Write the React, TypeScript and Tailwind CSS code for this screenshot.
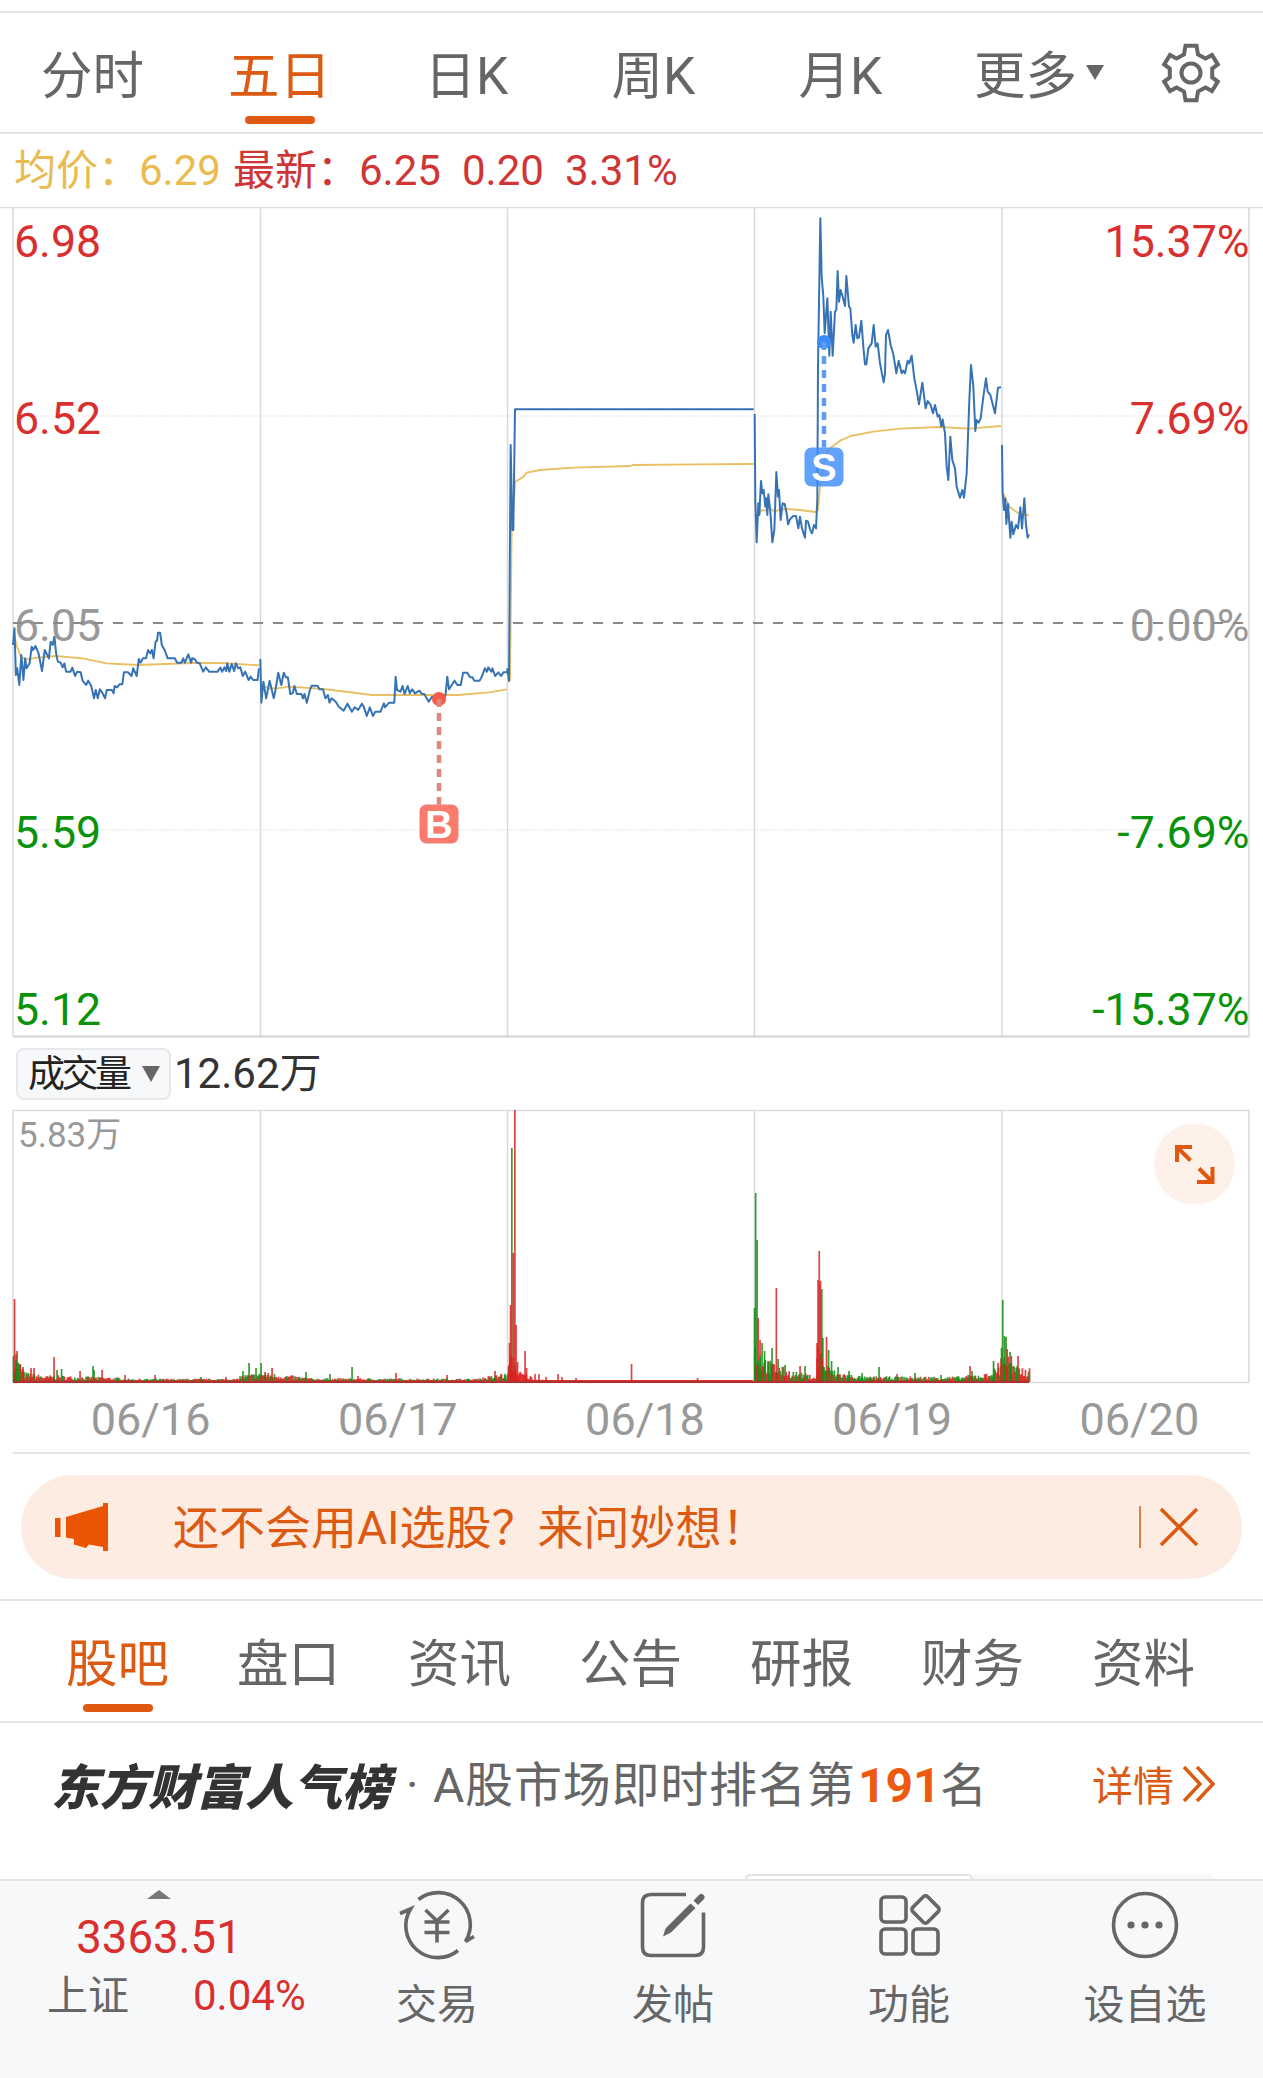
import type { ReactNode } from 'react'

const periods = ['分时', '五日', '日K', '周K', '月K']
const sections = ['股吧', '盘口', '资讯', '公告', '研报', '财务', '资料']
const dates = ['06/16', '06/17', '06/18', '06/19', '06/20']

const RED = '#d92f2f'
const GREEN = '#0a930a'
const BLUE = '#3673b5'
const YELLOW = '#eabf62'

const dayLines = [13, 260.5, 507.5, 754.5, 1002, 1249]

// every segment carries its own local coordinate space
const priceSegments = [
  {
    transform: 'translate(0 590) scale(.34435 .33333)',
    price: [
      '38,165 42,115 46,255 50,235 56,285 62,195 68,270 73,205 77,235 86,220 92,170 96,180 103,168 112,190 122,243 130,180 142,205 147,155 153,165 158,140 163,190 168,215 176,218 182,232 187,220 192,245 205,245 210,233 218,258 224,245 234,247 240,272 250,285 256,272 265,288 273,325 278,300 284,325 290,298 298,310 305,325 310,300 325,300 330,310 333,288 340,292 347,283 355,283 360,247 372,247 382,258 387,235 397,258 403,207 408,218 415,205 424,205 430,180 436,190 441,180 446,205 452,155 456,152 459,128 465,128 470,165 478,180 487,205 508,205 514,218 527,218 532,205 537,218 547,193 555,218 558,205 565,207 572,218 580,220 590,245 598,232 607,245 632,245 640,233 645,245 652,232 657,243 660,220 666,245 673,222 680,243 685,220 692,235 698,232 705,258 712,245 722,270 728,260 735,270 748,270 752,235',
      '756,207 759,338 765,275 773,325 783,272 795,325 800,300 808,248 817,285 824,248 830,262 836,262 843,312 850,310 855,288 862,312 875,312 880,325 884,312 891,338 900,300 905,287 922,287 928,298 938,298 945,325 952,315 957,338 963,325 975,335 984,350 998,362 1009,341 1022,365 1030,352 1040,360 1051,341 1057,352 1065,378 1074,352 1083,378 1090,365 1105,365 1115,340 1118,352 1130,338 1145,338 1149,260 1153,300 1163,305 1169,288 1175,312 1184,288 1190,310 1197,298 1205,310 1218,302 1225,312 1232,312 1245,335 1255,320 1275,328 1287,338 1294,312 1299,260 1304,298 1320,272 1328,285 1338,285 1345,248 1357,248 1365,262 1372,262 1377,272 1393,272 1400,258 1408,235 1414,245 1418,232 1427,245 1430,235 1438,258 1447,247 1455,258 1462,247 1472,247 1476,235',
    ],
    average: [
      '40,130 48,165 60,200 75,208 110,203 160,198 240,205 310,220 400,225 560,219 640,219 755,226',
      '762,285 780,295 805,295 840,290 940,297 1080,315 1200,315 1330,315 1420,307 1472,298',
    ],
  },
  {
    transform: 'translate(490 380) scale(.33333)',
    price: ['52,865 57,903 62,195 67,450 70,450 75,88 791,88'],
    average: ['60,903 65,460 70,380 76,305 85,300 100,290 110,278 150,270 250,263 420,258 430,255 620,253 791,252'],
  },
  {
    transform: 'translate(740 200) scale(.33333)',
    price: [
      '44,642 46,900 50,1027 55,910 58,945 63,843 67,880 71,870 76,920 79,895 82,945 85,883 91,935 97,1027 103,990 109,816 114,890 117,870 122,960 128,910 134,912 140,940 144,973 150,958 160,948 168,948 175,985 180,950 186,985 195,1013 198,962 204,965 210,988 216,1000 222,975 228,985 232,900 234,500 241,55 245,230 250,290 254,400 262,295 268,467 272,335 278,467 285,335 289,330 293,213 297,305 302,270 308,290 315,318 319,228 327,320 331,325 337,405 341,428 347,375 352,415 357,412 364,362 370,440 375,493 379,493 385,445 395,430 401,375 407,440 413,430 420,490 431,547 435,520 438,405 444,390 452,435 460,463 469,520 476,482 485,520 490,512 495,520 503,482 508,490 515,467 523,535 530,572 537,613 547,548 557,625 563,603 572,615 579,640 585,615 593,650 598,645 604,680 608,658 615,700 620,800 625,840 631,710 637,780 645,805 650,860 660,893 667,870 672,893 680,820 688,600 693,495 700,560 706,693 710,660 716,668 722,655 730,590 738,535 743,575 751,585 765,640 774,563 783,562',
      '786,735 788,880 792,930 796,895 799,972 804,912 811,1013 815,965 820,1003 828,975 834,985 841,922 846,985 853,895 858,975 863,1013 867,1003',
    ],
    average: [
      '58,940 65,930 75,932 85,922 105,935 115,930 140,927 180,930 225,936 234,930 240,860 255,770 270,745 300,722 332,708 400,695 480,686 600,681 685,686 725,683 783,678',
      '790,880 796,895 810,922 835,940 867,946',
    ],
  },
]

const priceLabels = [
  { y: 257, left: '6.98', right: '15.37%', color: RED },
  { y: 434, left: '6.52', right: '7.69%', color: RED },
  { y: 641, left: '6.05', right: '0.00%', color: '#999' },
  { y: 848, left: '5.59', right: '-7.69%', color: GREEN },
  { y: 1025, left: '5.12', right: '-15.37%', color: GREEN },
]

// x, height, up
const spikes: [number, number, number][] = [
  [13.5, 26, 0], [14.5, 83, 1], [16, 28, 0], [17, 31, 1], [20, 18, 1], [23, 15, 0], [31, 14, 1], [34, 14, 1],
  [54, 25, 1], [57, 12, 0], [61.5, 13, 0], [80, 11, 1], [93, 16, 0], [94, 12, 0], [102, 12, 1], [125, 7, 1],
  [155, 7, 1], [201, 5, 0], [226, 5, 1], [243, 11, 0], [249, 19, 0], [256, 14, 0],
  [261, 19, 0], [265, 10, 1], [272, 14, 1], [306, 10, 0], [330, 8, 0], [352, 15, 0], [358, 6, 1], [396, 9, 1],
  [447, 7, 1], [495, 11, 1], [501, 8, 1], [508.5, 15, 0],
  [509.5, 39, 1], [510.5, 77, 1], [511.8, 234, 0], [513.2, 129, 1], [514.8, 272, 1], [516, 57, 1], [517.5, 20, 1],
  [525, 31, 1], [526.5, 14, 1], [535, 8, 1], [539, 8, 1], [546, 5, 1], [558, 8, 1], [562, 5, 1], [576, 4, 1],
  [631.5, 18, 1], [697.5, 4, 1],
  [754.5, 74, 0], [755.6, 189, 0], [757, 142, 0], [758.2, 64, 1], [760, 42, 1], [762, 39, 0], [764.5, 31, 0],
  [768, 21, 1], [772, 34, 0], [776.3, 94, 1], [778, 23, 0], [785, 17, 0], [800, 16, 1], [805, 16, 0],
  [817, 39, 1], [818, 102, 1], [819.2, 131, 1], [820.4, 101, 1], [821.7, 93, 0], [822.8, 44, 0], [826.5, 45, 1],
  [828.5, 32, 0], [831.5, 21, 0], [838, 15, 0], [849, 11, 0], [862, 9, 0], [879, 15, 0], [897, 8, 1],
  [915, 9, 0], [941, 7, 0], [970, 16, 1], [972, 11, 0], [993.5, 21, 0], [998, 19, 1],
  [1001.5, 34, 0], [1002.7, 82, 0], [1004.5, 46, 0], [1006, 45, 0], [1007.2, 33, 1], [1010, 30, 0],
  [1011.3, 26, 1], [1018, 26, 1],
]

// from, to, height at start, height at end, share of rising minutes
const noise: [number, number, number, number, number][] = [
  [14, 24, 26, 12, 0.5], [24, 50, 9, 5, 0.6], [50, 120, 6, 4, 0.6], [120, 240, 3, 3, 0.6],
  [240, 260, 6, 8, 0.5], [260, 310, 9, 4, 0.6], [310, 480, 3.5, 3, 0.6], [480, 508, 4, 8, 0.5],
  [509, 516, 24, 24, 1], [516, 532, 11, 5, 1], [532, 546, 3, 2, 1], [546, 753, 1.6, 1.6, 1],
  [755, 770, 36, 16, 0.4], [770, 784, 19, 13, 0.5], [784, 817, 12, 5, 0.6], [817, 824, 36, 26, 0.5],
  [824, 838, 18, 8, 0.4], [838, 870, 9, 4, 0.5], [870, 965, 5, 5, 0.5], [965, 990, 6, 8, 0.6],
  [990, 1001, 10, 16, 0.5], [1001, 1012, 32, 20, 0.5], [1012, 1030, 15, 12, 0.5],
]

function volumeBars() {
  let seed = 7
  const rand = () => {
    seed = (seed * 16807) % 2147483647
    return seed / 2147483647
  }
  const bars: [number, number, number][] = []
  for (const [from, to, start, end, up] of noise) {
    for (let x = from; x < to; x += 1.03) {
      const peak = start + ((end - start) * (x - from)) / (to - from)
      bars.push([x, Math.max(2, peak * (0.35 + rand() * 0.8)), rand() < up ? 1 : 0])
    }
  }
  return [...spikes, ...bars]
}

function Marker({ x, y, top, label, color, dash }: { x: number; y: number; top: number; label: string; color: string; dash: string }) {
  return (
    <g>
      <circle cx={x} cy={y} r="7" fill={color} />
      <line x1={x} y1={y} x2={x} y2={top} stroke={dash} strokeWidth="4.5" strokeDasharray="8 6" />
      <rect x={x - 19.5} y={top} width="39" height="39" rx="7" fill={color} fillOpacity=".8" />
      <text x={x} y={top + 33} textAnchor="middle" fontSize="38" fontWeight="700" fill="#fff" fontFamily="Liberation Sans">
        {label}
      </text>
    </g>
  )
}

function PriceChart() {
  return (
    <svg className="block" width="1263" height="831" viewBox="0 207 1263 831">
      <path d="M0 207.5H1263" stroke="#dcdfe0" strokeWidth="1.5" />
      {dayLines.map(x => (
        <line key={x} x1={x} x2={x} y1="208" y2="1036" stroke="#d9d9d9" strokeWidth="1.5" />
      ))}
      <path d="M13 416H1249M13 830H1249" stroke="#dedede" strokeDasharray="1.5 1.5" />
      <path d="M13 1036.5H1249" stroke="#d3d3d3" strokeWidth="2" />
      <g fontFamily="Roboto" fontSize="44.7">
        {priceLabels.map(l => (
          <g key={l.left} fill={l.color}>
            <text x="14" y={l.y}>{l.left}</text>
            <text x="1249.500" y={l.y} textAnchor="end">{l.right}</text>
          </g>
        ))}
      </g>
      <path d="M13 623H1249" stroke="#8a8a8a" strokeWidth="1.8" strokeDasharray="10 10" />
      {priceSegments.map(s => (
        <g key={s.transform} transform={s.transform} fill="none" strokeLinejoin="round">
          {s.average.map(p => (
            <polyline key={p} points={p} stroke={YELLOW} strokeWidth="1.8" vectorEffect="non-scaling-stroke" />
          ))}
          {s.price.map(p => (
            <polyline key={p} points={p} stroke={BLUE} strokeWidth="2" vectorEffect="non-scaling-stroke" />
          ))}
        </g>
      ))}
      <Marker x={439} y={699} top={804.5} label="B" color="#f85a48" dash="#e0877c" />
      <Marker x={824} y={342} top={447.5} label="S" color="#3b8bfa" dash="#5f9cec" />
    </svg>
  )
}

function VolumeChart() {
  return (
    <svg className="block" width="1263" height="276" viewBox="0 1109 1263 276">
      <path d="M13 1110.5H1249M13 1382.5H1249" stroke="#dedede" strokeWidth="1.5" fill="none" />
      {dayLines.map(x => (
        <line key={x} x1={x} x2={x} y1="1110" y2="1382" stroke="#d9d9d9" strokeWidth="1.5" />
      ))}
      <text x="18" y="1147" fontSize="35" fill="#999" fontFamily="Roboto, Noto Sans CJK SC">5.83万</text>
      {volumeBars().map(([x, h, up], i) => (
        <rect key={i} x={x - 0.8} y={1382 - h} width="1.7" height={h} fill={up ? '#dc2222' : '#128c12'} fillOpacity=".85" />
      ))}
      <path d="M13 1382H1029" stroke="#b03030" strokeWidth="2" />
      <circle cx="1194.5" cy="1164" r="40.5" fill="#fef1ea" />
      <path
        d="M1177 1162V1147H1192M1177 1147L1190.500 1160.500M1212.500 1167V1182H1197M1212.500 1182L1199 1168.500"
        fill="none"
        stroke="#e0580f"
        strokeWidth="4"
      />
    </svg>
  )
}

function GearIcon() {
  return (
    <svg width="62" height="62" viewBox="-31 -31 62 62" fill="none" stroke="#666" strokeWidth="4">
      <path d="M-5.500-27.300H5.500L7-18.500L14.500-14.500L21-18L26.800-8.500L21.200-4.500V4.500L26.800 8.500L21 18L14.500 14.500L7 18.500L5.500 27.300H-5.500L-7 18.500L-14.500 14.500L-21 18L-26.800 8.500L-21.200 4.500V-4.500L-26.800-8.500L-21-18L-14.500-14.500L-7-18.500Z" />
      <circle r="9.500" />
    </svg>
  )
}

function Action({ label, children }: { label: string; children: ReactNode }) {
  return (
    <div className="flex w-[236px] flex-col items-center">
      <svg width="80" height="72" viewBox="-40 -36 80 72" fill="none" stroke="#666" strokeWidth="3.6">
        {children}
      </svg>
      <span className="mt-[18px] text-[41px] leading-[52px] text-[#666]">{label}</span>
    </div>
  )
}

export default function App() {
  return (
    <div className="h-[2078px] w-[1263px] overflow-hidden whitespace-nowrap bg-white font-['Roboto','Noto_Sans_CJK_SC',sans-serif]">
      <div className="h-[13px] border-b-2 border-[#e4e4e4]" />
      <nav className="flex h-[121px] items-stretch border-b-2 border-[#e4e4e4] text-[51.5px] text-[#666]">
        <div className="-ml-[1px] flex">
          {periods.map(p => (
            <div key={p} className="flex w-[187px] flex-col items-center pt-[26px]">
              <span className={p === '五日' ? 'leading-[76px] text-[#dd5a12]' : 'leading-[76px]'}>{p}</span>
              {p === '五日' && <span className="mt-[1px] h-[8px] w-[70px] rounded-full bg-[#e0580f]" />}
            </div>
          ))}
        </div>
        <div className="ml-[40px] flex items-start">
          <span className="mt-[26px] leading-[76px]">更多</span>
          <svg className="ml-[9px] mt-[52px]" width="18" height="15" viewBox="0 0 18 15">
            <path d="M0 0H18L9 15Z" fill="#666" />
          </svg>
        </div>
        <div className="ml-[56px] flex items-center">
          <GearIcon />
        </div>
      </nav>

      <div className="flex h-[73px] items-center pl-[14px] text-[42px] text-[#d03535]">
        <span className="w-[125px] text-[#eabb50]">均价：</span>
        <span className="w-[94px] text-[#eabb50]">6.29</span>
        <span className="w-[126px]">最新：</span>
        <span className="w-[103px]">6.25</span>
        <span className="w-[103px]">0.20</span>
        <span>3.31%</span>
      </div>
      <PriceChart />

      <div className="flex h-[71px] items-center pl-[16px]">
        <div className="flex h-[52px] w-[155px] items-center rounded-lg border-2 border-[#e6e8ec] bg-[#f7f8fa] pl-[10px]">
          <span className="mt-[2px] text-[37px] leading-[48px] tracking-[-3.5px] text-[#222]">成交量</span>
          <svg className="ml-[13px]" width="18" height="16" viewBox="0 0 18 16">
            <path d="M0 0H18L9 16Z" fill="#666" />
          </svg>
        </div>
        <span className="ml-[3px] text-[42px] leading-[52px] text-[#333]">12.62万</span>
      </div>
      <VolumeChart />
      <div className="mx-[13px] flex h-[69px] border-b-2 border-[#e5e5e5] pl-[14px] text-[45px] leading-[70px] text-[#999]">
        {dates.map(d => (
          <span key={d} className="w-[247.2px] shrink-0 text-center">{d}</span>
        ))}
      </div>

      <div className="mx-[21px] mt-[21px] flex h-[104px] items-center rounded-full bg-[#fcece2] pl-[34px] text-[#dd5a12]">
        <svg width="54" height="48" viewBox="0 0 54 48" fill="#ea5504">
          <path d="M0 15H5.500V34H0ZM11 14L48 3V0H53V48H48V44L34 41.500L31 45L19 41.500V36L11 34.500Z" />
        </svg>
        <span className="ml-[64px] mt-[2px] w-[966px] text-[46px] leading-[60px]">还不会用AI选股？来问妙想！</span>
        <svg width="60" height="44" viewBox="0 0 60 44" fill="none" stroke="#dd5a12">
          <path d="M1 1V43" strokeWidth="1.5" />
          <path d="M22 4L58 40M58 4L22 40" strokeWidth="3.5" />
        </svg>
      </div>

      <nav className="mt-[20px] flex h-[124px] border-y-2 border-[#e4e4e4] pl-[32px] text-[51.5px] text-[#666]">
        {sections.map(s => (
          <div key={s} className="flex w-[171px] flex-col items-center pt-[26px]">
            <span className={s === '股吧' ? 'leading-[76px] text-[#dd5a12]' : 'leading-[76px]'}>{s}</span>
            {s === '股吧' && <span className="mt-[1px] h-[8px] w-[70px] rounded-full bg-[#e0580f]" />}
          </div>
        ))}
      </nav>

      <div className="flex h-[151px] items-start pl-[51px] pt-[31px] text-[48px] leading-[64px] text-[#666]">
        <span className="mt-[3px] w-[355px] text-[48.5px] font-black italic text-[#333]">东方财富人气榜</span>
        <span className="w-[27px]">·</span>
        <span className="w-[425px] tracking-[0.8px]">A股市场即时排名第</span>
        <span className="w-[82px] text-[48px] font-bold text-[#ee5a10]">191</span>
        <span className="w-[152px] text-[47px]">名</span>
        <span className="mt-[1px] text-[41px] text-[#dd5a12]">详情</span>
        <svg className="ml-[8px] mt-[11px]" width="34" height="38" viewBox="0 0 34 38" fill="none" stroke="#dd5a12" strokeWidth="3.5">
          <path d="M2 2L18 19L2 36M15 2L31 19L15 36" />
        </svg>
      </div>
      <div className="flex h-[5px] pl-[745px]">
        <div className="w-[228px] rounded-t-xl border-2 border-b-0 border-[#e4e4e4]" />
        <div className="w-[241px] rounded-tr-xl bg-[#f7f8fa]" />
      </div>

      <footer className="flex h-[200px] border-t-2 border-[#e2e3e5] bg-[#f7f8fa]">
        <div className="flex w-[318px] flex-col items-center pt-[9px]">
          <svg className="shrink-0" width="24" height="9" viewBox="0 0 24 9">
            <path d="M12 0L24 9H0Z" fill="#777" />
          </svg>
          <span className="mt-[12px] text-[45.5px] leading-[54px] text-[#d92f2f]">3363.51</span>
          <span className="mt-[1px] flex w-[272px] gap-[64px] pl-[24px] text-[41px] leading-[60px] text-[#666]">
            上证<span className="text-[42px] text-[#d92f2f]">0.04%</span>
          </span>
        </div>
        <div className="flex pl-[1px] pt-[8px]">
          <Action label="交易">
            <path d="M-18.500-25.500A32 32 0 0 1 28.500 16.500L37 11.500M21 25.500A32 32 0 0 1 -26.500-16L-37-11.500" />
            <path d="M-11.500-15L0-4L11.500-15M0-4V17.500M-12.500-3H12.500M-12.500 7.500H12.500" />
          </Action>
          <Action label="发帖">
            <path d="M13-30.500H-22Q-30.500-30.500-30.500-22V22Q-30.500 30.500-22 30.500H22Q30.500 30.500 30.500 22V-12.500" />
            <path d="M-10 11.500L-7.500 3.500L17.500-21.500L22.500-17L-2 7.500ZM20.500-24.500L26.500-30.500Q28-32 30-30.500L31-29.500Q32.500-28 31-26L25-20Z" fill="#666" stroke="none" />
          </Action>
          <Action label="功能">
            <rect x="-28" y="-28" width="25" height="25" rx="4" />
            <rect x="-28" y="4" width="25" height="25" rx="4" />
            <rect x="4" y="4" width="25" height="25" rx="4" />
            <rect x="6" y="-26" width="21" height="21" rx="3" transform="rotate(45 16.500 -15.500)" />
          </Action>
          <Action label="设自选">
            <circle r="31.500" />
            <g fill="#666" stroke="none">
              <circle cx="-14" r="3.600" />
              <circle r="3.600" />
              <circle cx="14" r="3.600" />
            </g>
          </Action>
        </div>
      </footer>
    </div>
  )
}
